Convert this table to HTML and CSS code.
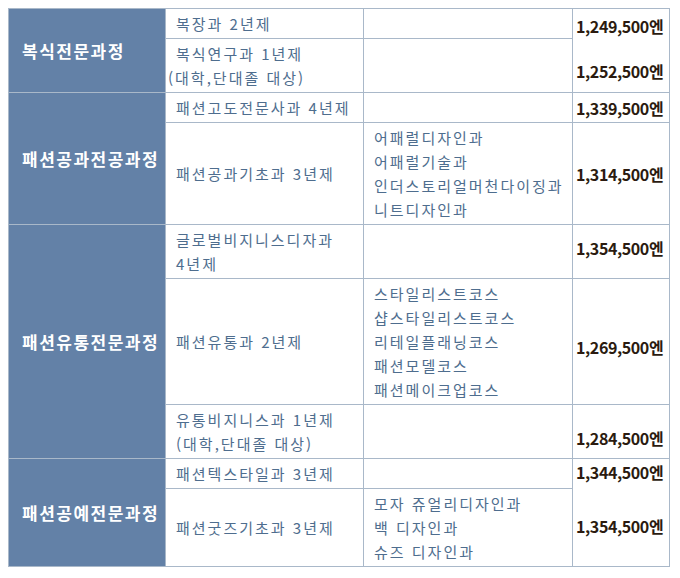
FILE: index.html
```html
<!DOCTYPE html>
<html lang="ko">
<head>
<meta charset="utf-8">
<title>학비</title>
<link rel="stylesheet" href="styles.css">
</head>
<body>
<table class="fees">
  <colgroup>
    <col class="col-cat">
    <col class="col-dept">
    <col class="col-major">
    <col class="col-price">
  </colgroup>
  <tbody>
    <tr>
      <td class="cat" rowspan="2">복식전문과정</td>
      <td class="dept">복장과 2년제</td>
      <td class="major"></td>
      <td class="price split split-a" rowspan="2">
        <div>1,249,500엔</div>
        <div class="second">1,252,500엔</div>
      </td>
    </tr>
    <tr>
      <td class="dept outdent">복식연구과 1년제<br>(대학,단대졸 대상)</td>
      <td class="major"></td>
    </tr>
    <tr>
      <td class="cat" rowspan="2">패션공과전공과정</td>
      <td class="dept">패션고도전문사과 4년제</td>
      <td class="major"></td>
      <td class="price">1,339,500엔</td>
    </tr>
    <tr>
      <td class="dept">패션공과기초과 3년제</td>
      <td class="major">어패럴디자인과<br>어패럴기술과<br>인더스토리얼머천다이징과<br>니트디자인과</td>
      <td class="price">1,314,500엔</td>
    </tr>
    <tr>
      <td class="cat" rowspan="3">패션유통전문과정</td>
      <td class="dept">글로벌비지니스디자과<br>4년제</td>
      <td class="major"></td>
      <td class="price top-11">1,354,500엔</td>
    </tr>
    <tr>
      <td class="dept">패션유통과 2년제</td>
      <td class="major">스타일리스트코스<br>샵스타일리스트코스<br>리테일플래닝코스<br>패션모델코스<br>패션메이크업코스</td>
      <td class="price top-56">1,269,500엔</td>
    </tr>
    <tr>
      <td class="dept">유통비지니스과 1년제<br>(대학,단대졸 대상)</td>
      <td class="major"></td>
      <td class="price top-21">1,284,500엔</td>
    </tr>
    <tr>
      <td class="cat" rowspan="2">패션공예전문과정</td>
      <td class="dept">패션텍스타일과 3년제</td>
      <td class="major"></td>
      <td class="price split split-b" rowspan="2">
        <div>1,344,500엔</div>
        <div class="second">1,354,500엔</div>
      </td>
    </tr>
    <tr>
      <td class="dept">패션굿즈기초과 3년제</td>
      <td class="major">모자 쥬얼리디자인과<br>백 디자인과<br>슈즈 디자인과</td>
    </tr>
  </tbody>
</table>
</body>
</html>
```

FILE: styles.css
```css
html, body {
  background: #ffffff;
}

body {
  margin: 8px;
  font-family: "Noto Sans CJK KR", "Noto Sans", sans-serif;
}

.fees {
  border-collapse: collapse;
  table-layout: fixed;
  width: 661px;
}

.col-cat { width: 157px; }
.col-dept { width: 198px; }
.col-major { width: 209px; }
.col-price { width: 97px; }

.fees td {
  border: 1px solid #a9b8c9;
  padding: 3px 10px 2px 10px;
  line-height: 24px;
  font-size: 15px;
  letter-spacing: 2px;
  color: #4e6d8e;
  vertical-align: middle;
  white-space: nowrap;
}

.fees td.cat {
  background: #6381a7;
  color: #ffffff;
  font-size: 17px;
  font-weight: 700;
  letter-spacing: 1.5px;
  padding-left: 13px;
  padding-right: 2px;
}

.fees td.outdent {
  padding-left: 2px;
  text-indent: 8px;
}

.fees td.price {
  color: #2b1b10;
  font-size: 16px;
  font-weight: 700;
  letter-spacing: -0.4px;
  padding-left: 3px;
  padding-right: 2px;
}

.fees td.split,
.fees td.top-11,
.fees td.top-56,
.fees td.top-21 {
  vertical-align: top;
}

.fees td.split-a { padding-top: 5px; }
.fees td.split-a .second { margin-top: 21px; }

.fees td.split-b { padding-top: 1px; }
.fees td.split-b .second { margin-top: 30px; }

.fees td.top-11 { padding-top: 11px; }
.fees td.top-56 { padding-top: 56px; }
.fees td.top-21 { padding-top: 21px; }
```
